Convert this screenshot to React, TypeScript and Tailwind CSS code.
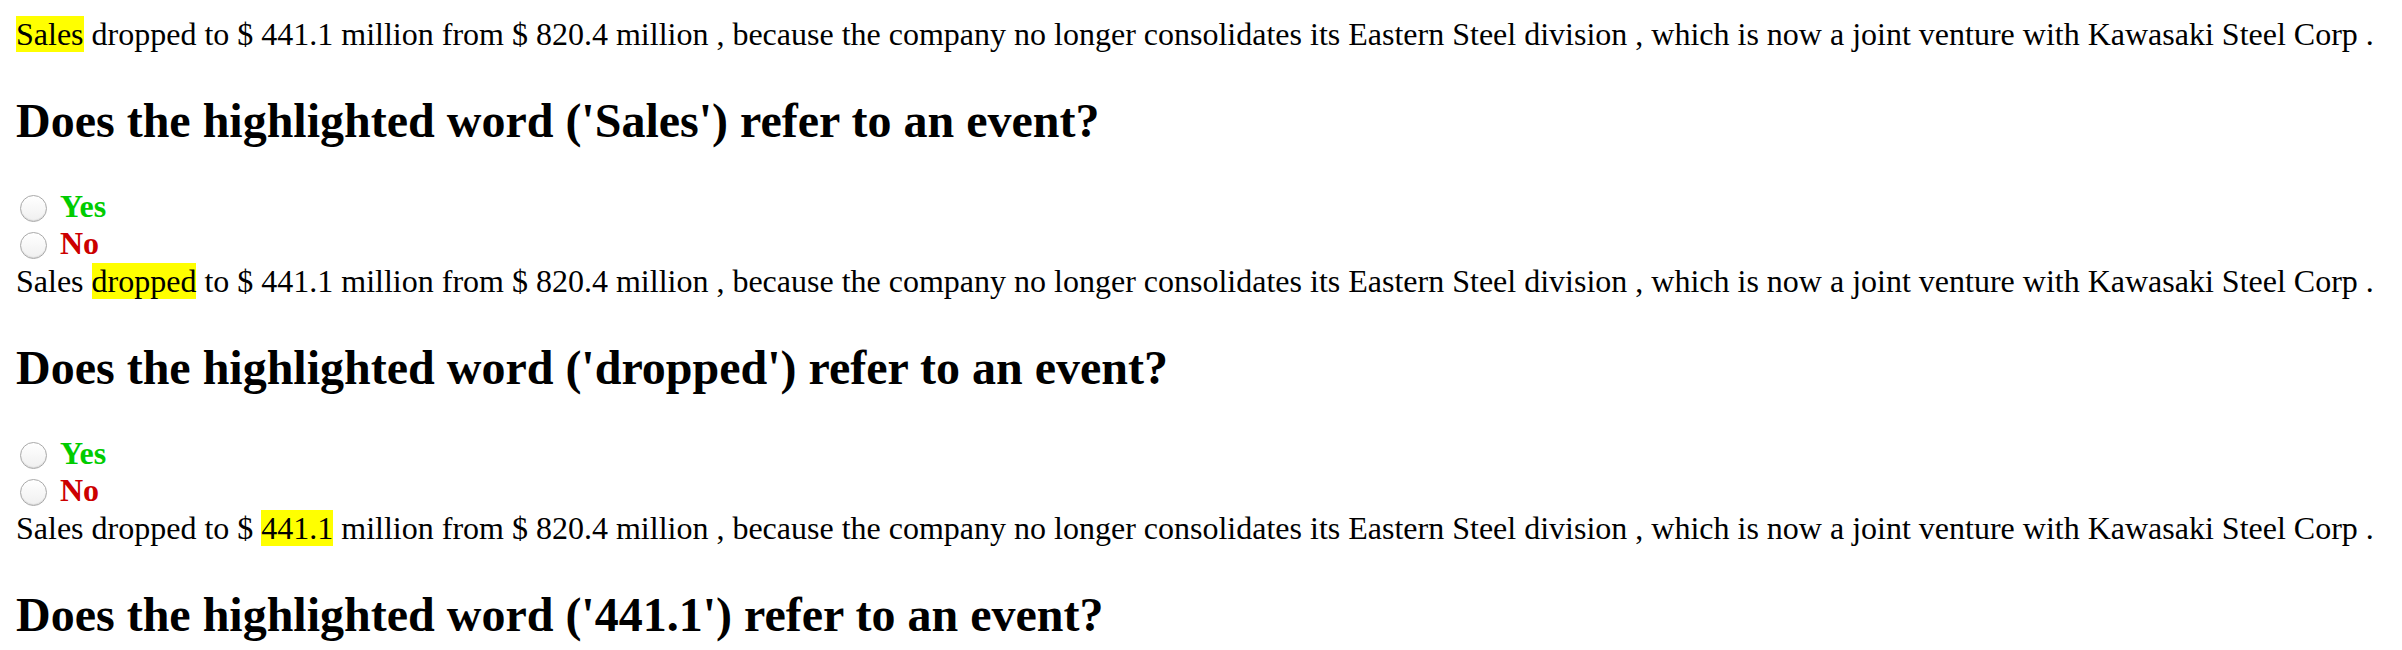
const sentence = [
  "Sales",
  "dropped",
  "to",
  "$",
  "441.1",
  "million",
  "from",
  "$",
  "820.4",
  "million",
  ",",
  "because",
  "the",
  "company",
  "no",
  "longer",
  "consolidates",
  "its",
  "Eastern",
  "Steel",
  "division",
  ",",
  "which",
  "is",
  "now",
  "a",
  "joint",
  "venture",
  "with",
  "Kawasaki",
  "Steel",
  "Corp",
  ".",
];

const questions = [0, 1, 4];

function Radio({ label, color }: { label: string; color: string }) {
  return (
    <label className="flex h-[37.66px] items-start">
      <span className="ml-[4px] mt-[7px] h-[27px] w-[27px] rounded-full border border-[#a9a9a9] bg-gradient-to-b from-white to-[#f0f0f0] shadow-[inset_0_-1px_1px_rgba(0,0,0,0.1)]" />
      <span className={`ml-[13px] text-[32px] font-bold leading-[36.8px] ${color}`}>{label}</span>
    </label>
  );
}

function Question({ idx, last }: { idx: number; last: boolean }) {
  const word = sentence[idx];
  return (
    <div>
      <div className="text-[32px] leading-[36.8px] whitespace-nowrap">
        {sentence.map((w, i) => (
          <span key={i}>
            {i > 0 && " "}
            <span className={i === idx ? "bg-[#ffff00]" : ""}>{w}</span>
          </span>
        ))}
      </div>
      <h2 className="my-[39.84px] text-[48px] font-bold leading-[55.2px]">
        Does the highlighted word ('{word}') refer to an event?
      </h2>
      {!last && (
        <>
          <Radio label="Yes" color="text-[#00cc00]" />
          <Radio label="No" color="text-[#cc0000]" />
        </>
      )}
    </div>
  );
}

export default function App() {
  return (
    <div className="bg-white p-[16px] text-black font-['Liberation_Serif','Times_New_Roman',serif]">
      {questions.map((q, i) => (
        <Question key={q} idx={q} last={i === questions.length - 1} />
      ))}
    </div>
  );
}
